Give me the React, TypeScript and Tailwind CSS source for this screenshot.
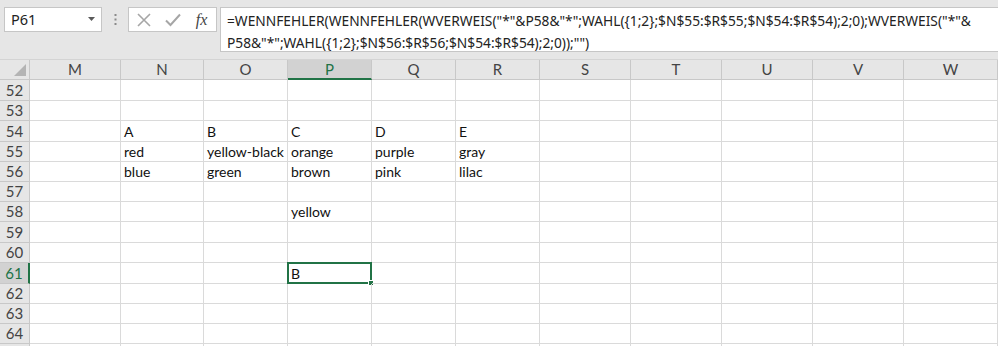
import React from "react";

const cols = ["M", "N", "O", "P", "Q", "R", "S", "T", "U", "V", "W"];
const colW = [91, 83, 84, 84, 84, 84, 91, 91, 91, 91, 94];

const rows: { n: number; h: number }[] = [
  { n: 52, h: 21 },
  { n: 53, h: 20 },
  { n: 54, h: 21 },
  { n: 55, h: 20 },
  { n: 56, h: 20 },
  { n: 57, h: 20 },
  { n: 58, h: 20 },
  { n: 59, h: 21 },
  { n: 60, h: 20 },
  { n: 61, h: 21 },
  { n: 62, h: 20 },
  { n: 63, h: 20 },
  { n: 64, h: 20 },
  { n: 65, h: 20 },
];

const data: Record<string, string> = {
  "N54": "A",
  "O54": "B",
  "P54": "C",
  "Q54": "D",
  "R54": "E",
  "N55": "red",
  "O55": "yellow-black",
  "P55": "orange",
  "Q55": "purple",
  "R55": "gray",
  "N56": "blue",
  "O56": "green",
  "P56": "brown",
  "Q56": "pink",
  "R56": "lilac",
  "P58": "yellow",
  "P61": "B",
};

const cellFont = { fontFamily: "Lato, 'Liberation Sans', sans-serif" };
const uiFont = { fontFamily: "'Noto Sans', 'Open Sans', sans-serif" };

export default function App() {
  return (
    <div className="w-[998px] h-[346px] overflow-hidden bg-white relative">
      {/* Top formula bar area */}
      <div className="h-[60px] bg-[#e6e6e6] flex items-start pt-[7px] pl-[4px] border-b border-[#d4d4d4]">
        {/* Name box */}
        <div className="w-[98px] h-[25px] bg-white border border-[#c6c6c6] flex items-center justify-between pl-[6px] pr-[6px]">
          <span className="text-[14.5px] text-[#222]" style={uiFont}>P61</span>
          <svg width="7" height="4" viewBox="0 0 7 4" className="mb-[1px]">
            <path d="M0 0 L7 0 L3.5 4 Z" fill="#5a5a5a" />
          </svg>
        </div>
        {/* dots */}
        <div className="w-[26px] h-[25px] flex items-center justify-center">
          <svg width="3" height="11" viewBox="0 0 3 11">
            <rect x="0.5" y="0" width="2" height="2" fill="#8a8a8a" />
            <rect x="0.5" y="4.5" width="2" height="2" fill="#8a8a8a" />
            <rect x="0.5" y="9" width="2" height="2" fill="#8a8a8a" />
          </svg>
        </div>
        {/* Formula buttons */}
        <div className="w-[89px] h-[25px] bg-white border border-[#c6c6c6] flex items-center">
          <div className="w-[30px] flex justify-center">
            <svg width="14" height="14" viewBox="0 0 14 14">
              <path d="M1 1 L13 13 M13 1 L1 13" stroke="#a6a6a6" strokeWidth="1.6" fill="none" />
            </svg>
          </div>
          <div className="w-[28px] flex justify-center">
            <svg width="16" height="14" viewBox="0 0 16 14">
              <path d="M1 7.5 L5.5 12 L15 1.5" stroke="#a6a6a6" strokeWidth="2" fill="none" />
            </svg>
          </div>
          <div className="w-[29px] flex justify-center">
            <span
              className="text-[16px] italic text-[#444] leading-none"
              style={{ fontFamily: "'Liberation Serif', 'DejaVu Serif', serif" }}
            >
              fx
            </span>
          </div>
        </div>
        {/* Formula text box */}
        <div className="ml-[3px] flex-1 h-[45px] bg-white border border-[#c6c6c6] border-r-0 pl-[6px] pt-[2px] overflow-hidden">
          <div className="text-[13.75px] leading-[22px] text-[#222] whitespace-nowrap" style={uiFont}>
            =WENNFEHLER(WENNFEHLER(WVERWEIS("*"&amp;P58&amp;"*";WAHL({"{"}1;2{"}"};$N$55:$R$55;$N$54:$R$54);2;0);WVERWEIS("*"&amp;
            <br />
            P58&amp;"*";WAHL({"{"}1;2{"}"};$N$56:$R$56;$N$54:$R$54);2;0));"")
          </div>
        </div>
      </div>

      {/* Column header */}
      <div className="flex h-[20px]" style={cellFont}>
        <div className="w-[30px] h-full bg-[#e6e6e6] border-r border-b border-[#c8c8c8] relative">
          <svg width="12" height="12" viewBox="0 0 12 12" className="absolute right-[3px] bottom-[3px]">
            <path d="M12 0 L12 12 L0 12 Z" fill="#b4b4b4" />
          </svg>
        </div>
        {cols.map((c, i) => {
          const sel = c === "P";
          return (
            <div
              key={c}
              style={{ width: colW[i] }}
              className={
                sel
                  ? "h-full bg-[#d2d2d2] border-r border-[#c8c8c8] border-b-2 border-b-[#217346] flex items-center justify-center text-[15px] text-[#217346]"
                  : "h-full bg-[#e6e6e6] border-r border-b border-[#c8c8c8] flex items-center justify-center text-[15px] text-[#444]"
              }
            >
              {c}
            </div>
          );
        })}
      </div>

      {/* Rows */}
      {rows.map((r) => {
        const selRow = r.n === 61;
        const hidden = r.n === 65;
        return (
          <div key={r.n} className="flex" style={{ height: r.h, ...cellFont }}>
            <div
              className={
                selRow
                  ? "w-[30px] h-full bg-[#d2d2d2] border-r-2 border-r-[#217346] border-b border-b-[#c8c8c8] flex items-center justify-center text-[15px] text-[#217346]"
                  : "w-[30px] h-full bg-[#e6e6e6] border-r border-b border-[#c8c8c8] flex items-center justify-center text-[15px] text-[#444]"
              }
            >
              {hidden ? "" : r.n}
            </div>
            {cols.map((c, i) => {
              const key = `${c}${r.n}`;
              const val = data[key];
              const sel = key === "P61";
              return (
                <div
                  key={key}
                  style={{ width: colW[i] }}
                  className="h-full border-r border-b border-[#dadada] relative flex items-center pl-[3px] text-[14px] text-[#111] whitespace-nowrap"
                >
                  {val}
                  {sel && (
                    <div className="absolute left-[-1px] top-[-1px] right-[-1px] bottom-[-1px] border-2 border-[#217346]">
                      <div className="absolute right-[-4px] bottom-[-4px] w-[6px] h-[6px] bg-[#217346] border border-white" />
                    </div>
                  )}
                </div>
              );
            })}
          </div>
        );
      })}
    </div>
  );
}
